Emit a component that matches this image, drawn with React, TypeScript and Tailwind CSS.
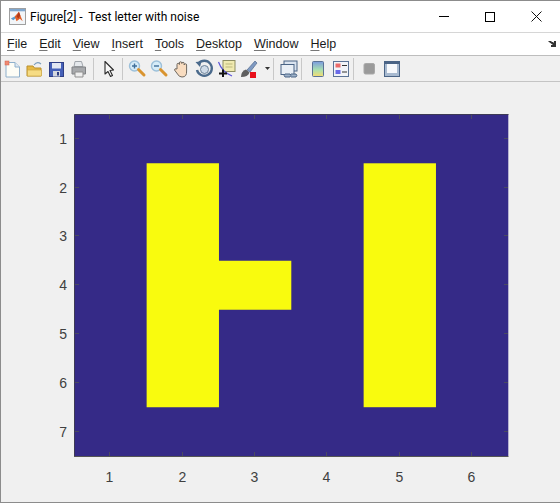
import React from "react";

const font = { fontFamily: '"Liberation Sans", Arial, sans-serif' };

function M({ u, rest }: { u: string; rest: string }) {
  return (
    <span className="text-[12.5px] leading-[16px] text-[#1a1a1a]">
      <span className="underline decoration-[#777] underline-offset-2">{u}</span>
      {rest}
    </span>
  );
}

function Sep({ className }: { className: string }) {
  return <div className={`h-[22px] w-px shrink-0 bg-[#c8c8c8] ${className}`} />;
}

function Ico({ children, w = 22.5 }: { children: React.ReactNode; w?: number }) {
  return (
    <svg width={w} height="20" viewBox={`0 0 ${w} 20`} className="shrink-0">
      {children}
    </svg>
  );
}

function MatlabLogo() {
  return (
    <svg width="17" height="17" viewBox="0 0 18 18">
      <rect x="0.5" y="0.5" width="17" height="17" fill="#f2f5f8" stroke="#9a9a9a" />
      <rect x="1" y="1" width="16" height="2.5" fill="#7fa7cf" />
      <path d="M2 11 L6 9 L8 10 L4.5 13 Z" fill="#5a9bd0" />
      <path d="M6 9 L10.5 4 L14.5 14 L11.5 11.5 L8 14 Z" fill="#e0602a" />
      <path d="M10.5 4 L12 8 L10 11 L8 9 Z" fill="#b23a1b" />
    </svg>
  );
}

function Mag({ minus }: { minus?: boolean }) {
  return (
    <Ico>
      <circle cx="7.5" cy="7" r="5" fill="#d6ecf8" stroke="#9cc0da" strokeWidth="1.4" />
      <path d={minus ? "M5 7H10" : "M5 7H10M7.5 4.5V9.5"} stroke="#3f6f9a" strokeWidth="1.4" />
      <path d="M11.5 10.5 L17 16" stroke="#d9942f" strokeWidth="3" strokeLinecap="round" />
    </Ico>
  );
}

function Toolbar() {
  return (
    <div className="flex h-[26px] shrink-0 items-center border-b border-[#c4c4c4] bg-[#f0f0f0] pl-[1px]">
      <Ico>
        <path d="M4 3.5H13L17.5 8V18H4Z" fill="#fdfdf6" stroke="#8fb0cc" />
        <path d="M13 3.5V8H17.5" fill="#dfe9f2" stroke="#8fb0cc" />
        <rect x="3" y="2" width="4" height="4" fill="#ef8a73" stroke="#d0604a" strokeWidth=".5" />
      </Ico>
      <Ico>
        <path d="M2 7H8L9.5 9H16V17H2Z" fill="#e6b945" stroke="#b98f2c" />
        <path d="M2.5 11H16.5V17H2.5Z" fill="#f6dc84" stroke="#c9a23c" strokeWidth=".6" />
        <path d="M9 6 Q12 2 16 5" fill="none" stroke="#7a9dbd" strokeWidth="1.2" />
      </Ico>
      <Ico>
        <rect x="2.5" y="3.5" width="14" height="14" fill="#4560b8" stroke="#2f3f85" />
        <rect x="5" y="4" width="9" height="5.5" fill="#e2e7f3" />
        <rect x="6" y="12" width="7" height="5.5" fill="#d6d9df" />
        <rect x="10" y="13" width="2" height="3.5" fill="#2f3f85" />
      </Ico>
      <Ico>
        <path d="M5 2.5H11.5L13 7.5H4Z" fill="#e5e8ec" stroke="#a0a5ab" />
        <path d="M2 8H15.5V15H2Z" fill="#a7a9ac" stroke="#808285" />
        <path d="M5 13H13V18H5Z" fill="#eeeeee" stroke="#8f8f8f" />
      </Ico>
      <Sep className="ml-[1px]" />
      <div className="ml-[4px]">
        <Ico>
          <path d="M7 2.5 V15 L10 12.5 L12.5 17.5 L14.5 16.5 L12 11.5 L15.5 11 Z" fill="#f7f7f7" stroke="#2a2a2a" strokeWidth="1.1" strokeLinejoin="round" />
        </Ico>
      </div>
      <Sep className="ml-[1px] mr-[4px]" />
      <Mag />
      <Mag minus />
      <Ico>
        <path d="M5 10 V5.5 a1.2 1.2 0 0 1 2.4 0 V4 a1.2 1.2 0 0 1 2.4 0 V4.5 a1.2 1.2 0 0 1 2.4 0 V6 a1.2 1.2 0 0 1 2.4 0 V12 Q15 18 10 18 Q7 18 5.5 15 L2.5 11 Q2.5 9 5 10Z" fill="#f8dcc0" stroke="#6e675f" strokeWidth="1" />
      </Ico>
      <Ico>
        <path d="M4.5 4.5 A7.5 7.5 0 1 1 3 11" fill="none" stroke="#4a6a8c" strokeWidth="2.4" />
        <path d="M1.5 3 L7.5 2.5 L6 8 Z" fill="#4a6a8c" />
        <circle cx="10.5" cy="10.5" r="4" fill="#cfdbe8" stroke="#6b8299" />
      </Ico>
      <Ico>
        <rect x="6" y="1.5" width="12" height="11" fill="#f0eab0" stroke="#8d8d62" />
        <path d="M8.5 5H15.5M8.5 8H15.5" stroke="#bcb77c" />
        <path d="M1.5 3 Q5 13 15 17" fill="none" stroke="#5c55d8" strokeWidth="1.2" />
        <path d="M6 10.5V18M2 14.5H10" stroke="#111" strokeWidth="2" />
      </Ico>
      <Ico>
        <path d="M8 11 L16 2 L18 4 L11 13 Z" fill="#7f9ac2" stroke="#51698d" strokeWidth=".7" />
        <path d="M2 18 Q2 12 7 10.5 L10.5 13.5 Q9 18 2 18Z" fill="#5e5e5e" />
        <rect x="11" y="13" width="6" height="6" fill="#e8101c" />
      </Ico>
      <svg width="5" height="4" viewBox="0 0 5 4" className="ml-[3px] shrink-0">
        <path d="M0 0H5L2.5 3Z" fill="#333" />
      </svg>
      <Sep className="ml-[3px] mr-[5px]" />
      <Ico>
        <rect x="5" y="2" width="13" height="10" fill="#d9e3ef" stroke="#4a6486" />
        <rect x="2" y="5.5" width="13" height="10" fill="#e9eff6" stroke="#4a6486" />
        <path d="M6 15 h5 a2 2 0 0 1 0 3 h-5 a2 2 0 0 1 0 -3Z M12 15h5a2 2 0 0 1 0 3h-5" fill="#9eb2c9" stroke="#4a6486" />
      </Ico>
      <Sep className="mr-[6px]" />
      <Ico w={22.5}>
        <defs>
          <linearGradient id="cb" x1="0" y1="0" x2="0" y2="1">
            <stop offset="0" stopColor="#7b9be0" />
            <stop offset=".55" stopColor="#a8e0b0" />
            <stop offset="1" stopColor="#f6dc70" />
          </linearGradient>
        </defs>
        <rect x="4.5" y="2.5" width="11" height="15" rx="1" fill="url(#cb)" stroke="#5b7396" />
      </Ico>
      <Ico>
        <rect x="2.5" y="2.5" width="15" height="15" fill="#f2f4f8" stroke="#5b7396" />
        <rect x="4.5" y="4.5" width="5" height="4" fill="#ea6a6a" />
        <rect x="4.5" y="11" width="5" height="4" fill="#6a6ae8" />
        <path d="M11 6.5H16M11 13H16" stroke="#333" strokeWidth="1.2" />
      </Ico>
      <Sep className="mr-[6px]" />
      <Ico w={22}>
        <rect x="4" y="4.5" width="10.5" height="10.5" rx="1.5" fill="#9a9a9a" stroke="#a8a8a8" />
      </Ico>
      <Ico>
        <rect x="2.5" y="2.5" width="15" height="15" fill="#a8bad0" stroke="#4a6486" />
        <rect x="2.5" y="2.5" width="15" height="2.5" fill="#4a6486" />
        <rect x="5" y="5" width="10" height="9" fill="#f7f9fc" />
      </Ico>
    </div>
  );
}

function Plot() {
  const x0 = 73.3, y0 = 32.5, w = 434, h = 341.5;
  const cw = w / 6, ch = h / 7;
  const tx = [1, 2, 3, 4, 5, 6];
  const ty = [1, 2, 3, 4, 5, 6, 7];
  return (
    <svg width="559" height="420" viewBox="0 0 559 420" className="block">
      <rect x={x0} y={y0} width={w} height={h} fill="#352a87" />
      <path
        d={`M${x0 + cw} ${y0 + ch}h${cw}v${ch * 2}h${cw}v${ch}h${-cw}v${ch * 2}h${-cw}Z`}
        fill="#f9fb0e"
      />
      <rect x={x0 + cw * 4} y={y0 + ch} width={cw} height={ch * 5} fill="#f9fb0e" />
      <path d="M73.5 374.5V32.5H507.5" fill="none" stroke="#3d3a55" />
      <path d="M73 374.5H507.5" stroke="#555" fill="none" />
      {tx.map((t) => {
        const x = Math.round(x0 + cw * (t - 0.5)) - 0.5;
        return (
          <g key={t}>
            <path d={`M${x} 33v4M${x} 374v-4`} stroke="#4a4a60" />
            <text x={x} y="400" textAnchor="middle" fontSize="14" fill="#404040" style={font}>
              {t}
            </text>
          </g>
        );
      })}
      {ty.map((t) => {
        const y = Math.round(y0 + ch * (t - 0.5)) - 0.5;
        return (
          <g key={t}>
            <path d={`M74 ${y}h4M507 ${y}h-4`} stroke="#4a4a60" />
            <text x="66" y={y + 5.5} textAnchor="end" fontSize="14" fill="#404040" style={font}>
              {t}
            </text>
          </g>
        );
      })}
    </svg>
  );
}

export default function App() {
  return (
    <div className="flex h-[503px] w-[560px] flex-col overflow-hidden border-b border-l border-t border-[#8c8c8c] bg-[#f0f0f0]" style={font}>
      <div className="flex h-[31px] shrink-0 items-center bg-white pl-[8px]">
        <MatlabLogo />
        <span className="ml-[4px] whitespace-pre text-[12px] text-black" style={{ fontFamily: 'Roboto, sans-serif' }}>
          Figure[2] -  Test letter with noise
        </span>
        <div className="ml-auto mr-[1px] flex h-full items-center">
          <div className="flex w-[46px] justify-center">
            <div className="h-px w-[10px] bg-black" />
          </div>
          <div className="flex w-[46px] justify-center">
            <div className="h-[10px] w-[10px] border border-black" />
          </div>
          <div className="flex w-[46px] justify-center">
            <svg width="11" height="11" viewBox="0 0 11 11">
              <path d="M.5.5L10.5 10.5M10.5.5L.5 10.5" stroke="#111" />
            </svg>
          </div>
        </div>
      </div>
      <div className="flex h-[24px] shrink-0 items-center gap-[12px] border-b border-t border-[#d6d6d6] border-b-[#bdbdbd] bg-white pl-[6px] pr-[3px]">
        <M u="F" rest="ile" />
        <M u="E" rest="dit" />
        <M u="V" rest="iew" />
        <M u="I" rest="nsert" />
        <M u="T" rest="ools" />
        <M u="D" rest="esktop" />
        <M u="W" rest="indow" />
        <M u="H" rest="elp" />
        <svg width="9" height="8" viewBox="0 0 9 8" className="ml-auto">
          <path d="M0 1H3L4 2H5L6 3V1H8V7H3V5H5L1 2Z" fill="#333" />
        </svg>
      </div>
      <Toolbar />
      <Plot />
    </div>
  );
}
